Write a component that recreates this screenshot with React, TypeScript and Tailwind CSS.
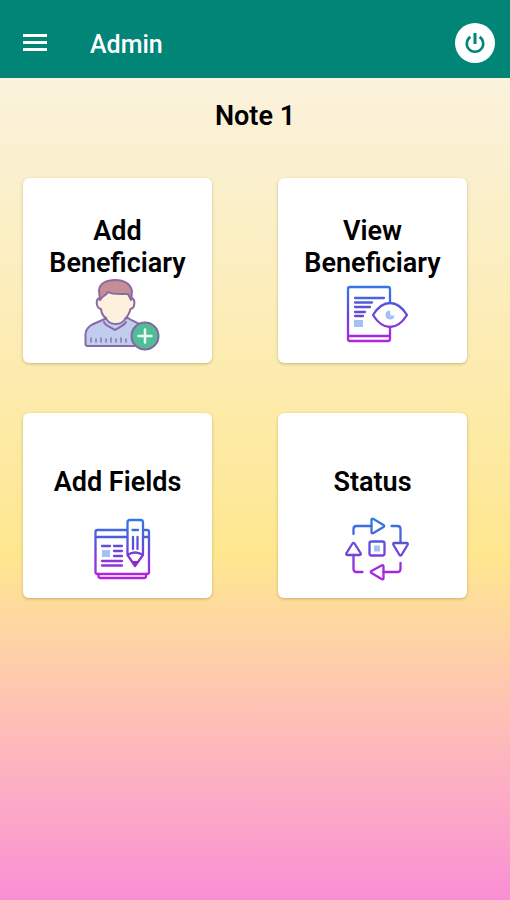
import type { ReactNode } from 'react'

function MenuIcon() {
  return (
    <svg viewBox="0 0 24 18" className="h-[18px] w-6" fill="currentColor" aria-hidden="true">
      <path d="M0 0h24v3H0zM0 7h24v3H0zM0 14h24v3H0z" />
    </svg>
  )
}

function PowerIcon() {
  return (
    <svg viewBox="0 0 24 24" className="size-6" fill="none" stroke="currentColor" strokeWidth="2.6" aria-hidden="true">
      <path d="M12 2v11" strokeWidth="3" />
      <path d="M7.400 5.800a8.200 8.200 0 1 0 9.200 0" />
    </svg>
  )
}

function GradientDefs({ id }: { id: string }) {
  return (
    <defs>
      <linearGradient id={id} gradientUnits="userSpaceOnUse" x1="0" y1="5" x2="0" y2="65">
        <stop offset="0" stopColor="#2f7be6" />
        <stop offset="0.5" stopColor="#6548d6" />
        <stop offset="1" stopColor="#b91fe0" />
      </linearGradient>
    </defs>
  )
}

function AddUserIcon() {
  return (
    <svg viewBox="0 0 80 74" className="h-[74px] w-20" strokeLinecap="round" strokeLinejoin="round" aria-hidden="true">
      <g stroke="#8a6aa5" strokeWidth="2" fill="none">
        <path d="M24 40C15 44 4.500 46 4.500 56v9q0 2 2 2h56V51C62 44 52 43 47 39Z" fill="#c0cdee" />
        <path d="M19 19c-5 1-4 10 1 11 1 7 5 9 5 9 2 5 5 6 9.500 6s8-1 10-6c0 0 3-2 5-9 5-1 5-10 1-11l-1-9H20Z" fill="#fdf0dd" />
        <path d="M19 21l-1-9C18 4 26 1 34 1c9 0 15 3 17 11l-1 9-3-6c-7 0-15 1-20-2-1 3-6 4-8 8Z" fill="#c58d95" />
        <path d="M23 43c1 4 7 5 11 8 4-3 9-4 11-8" />
      </g>
      <path d="M10 59v4M15 60v3M20 59v4M25 60v3M30 59v4M35 60v3M40 59v4M45 60v3" stroke="#8277ae" strokeWidth="1.500" />
      <circle cx="64" cy="57" r="13.500" fill="#50bd98" stroke="#806a9d" strokeWidth="2" />
      <path d="M64 50.500v13M57.500 57h13" stroke="#e3fbf0" strokeWidth="2.500" />
    </svg>
  )
}

function ViewPageIcon() {
  return (
    <svg viewBox="0 0 80 74" className="h-[74px] w-20" fill="none" strokeLinecap="round" strokeLinejoin="round" aria-hidden="true">
      <GradientDefs id="view-stroke" />
      <g stroke="url(#view-stroke)" strokeWidth="2.3">
        <path d="M54 24V10q0-2-2-2H14q-2 0-2 2v50q0 2 2 2h38q2 0 2-2V48M12 57h42" />
        <path d="M37 36C42 28 48 24 54 24s12 4 17 12C66 44 60 48 54 48s-12-4-17-12Z" />
        <path d="M19 19.010L48 19M19 23.510L36 23.500M19 28.010L34 28M19 33.010L29 33M19 37.010L27 37" />
      </g>
      <path d="M18 41h9v7h-9zM54 31.500a4.500 4.500 0 1 0 4.500 5h-4Z" fill="#a3c0f7" />
    </svg>
  )
}

function EditFieldsIcon() {
  return (
    <svg viewBox="0 0 80 74" className="h-[74px] w-20" fill="none" strokeLinecap="round" strokeLinejoin="round" aria-hidden="true">
      <GradientDefs id="fields-stroke" />
      <g stroke="url(#fields-stroke)" strokeWidth="2.3">
        <path d="M46 16H16.500q-2 0-2 2v40q0 2 2 2H66q2 0 2-2V18q0-2-2-2h-4M14.500 23.010L46 23M62 23.010L68 23" />
        <path d="M17.500 60v2q0 2 2 2H63q2 0 2-2v-2" />
        <path d="M46.500 41V8.500q0-2.500 2.500-2.500h10.500Q62 6 62 8.500V41l-8 11ZM46.500 41q7.500-5 15.500 0M51.500 16.010L57 16M52 23v12M56.510 23L56.500 35" />
        <path d="M21 32.010L29 32M33 32.010L41 32M33 37.010L41 37M33 42.010L41 42M21 47.010L41 47M21 51.510L41 51.500" />
      </g>
      <path d="M50 47h8l-4 5.500Z" fill="#8b2cc8" />
      <path d="M21 36h8v7h-8z" fill="#a3c0f7" />
    </svg>
  )
}

function CycleIcon() {
  return (
    <svg viewBox="0 0 80 74" className="h-[74px] w-20" fill="none" strokeLinecap="round" strokeLinejoin="round" aria-hidden="true">
      <GradientDefs id="cycle-stroke" />
      <g stroke="url(#cycle-stroke)" strokeWidth="2.3">
        <path d="M17.500 20v-5q0-3 3-3h15M55.500 12h6q3 0 3 3v14M64.500 49v6q0 3-3 3h-14M26.500 58h-6q-3 0-3-3V41" />
        <path d="M35.500 6q0-2 2-1l10 6q1.500 1 0 2l-10 6q-2 1-2-1Z" />
        <path d="M58.500 29h12q2 0 1 2l-6 10q-1 1-2 0l-6-10q-1-2 1-2Z" />
        <path d="M47.500 52.500q0-2-2-1l-10 5.500q-1.500 1 0 2l10 6q2 1 2-1Z" />
        <path d="M12 41h11.500q2 0 1-2l-6-9.500q-1-1-2 0l-6 9.500q-1 2 1.500 2Z" />
        <rect x="33.500" y="27.500" width="15" height="14" rx="2" />
      </g>
      <path d="M38 31.500h6v6h-6z" fill="#a3c0f7" />
    </svg>
  )
}

function ActionCard({ label, icon }: { label: string; icon: ReactNode }) {
  return (
    <button type="button" className="flex h-[185px] flex-col items-center rounded-md bg-white px-4 pt-[37px] shadow-[0_1px_3px_rgba(80,60,0,0.3)]">
      <span className="flex min-h-16 items-center text-[27px] leading-8 font-semibold text-black">{label}</span>
      <span className="pl-1.5">{icon}</span>
    </button>
  )
}

const actions = [
  { label: 'Add Beneficiary', icon: <AddUserIcon /> },
  { label: 'View Beneficiary', icon: <ViewPageIcon /> },
  { label: 'Add Fields', icon: <EditFieldsIcon /> },
  { label: 'Status', icon: <CycleIcon /> },
]

export default function App() {
  return (
    <div className="flex min-h-screen flex-col font-['Roboto',sans-serif]">
      <header className="flex h-[78px] items-center bg-[#018577] pt-2 pr-[15px] pl-[23px] text-white">
        <button type="button" aria-label="Open menu">
          <MenuIcon />
        </button>
        <h1 className="ml-[43px] pt-1 text-[25px] leading-8 font-medium">Admin</h1>
        <button type="button" aria-label="Log out" className="ml-auto flex size-10 items-center justify-center rounded-full bg-white text-[#018577]">
          <PowerIcon />
        </button>
      </header>
      <main className="flex-1 bg-linear-to-b from-[#faf2dc] via-[#fee78f] via-58% to-[#fa8ed5] pt-[22px]">
        <h2 className="text-center text-[27px] leading-8 font-semibold text-black">Note 1</h2>
        <div className="mt-[46px] grid grid-cols-2 gap-x-[66px] gap-y-[50px] pr-[43px] pl-[23px]">
          {actions.map((action) => (
            <ActionCard key={action.label} label={action.label} icon={action.icon} />
          ))}
        </div>
      </main>
    </div>
  )
}
